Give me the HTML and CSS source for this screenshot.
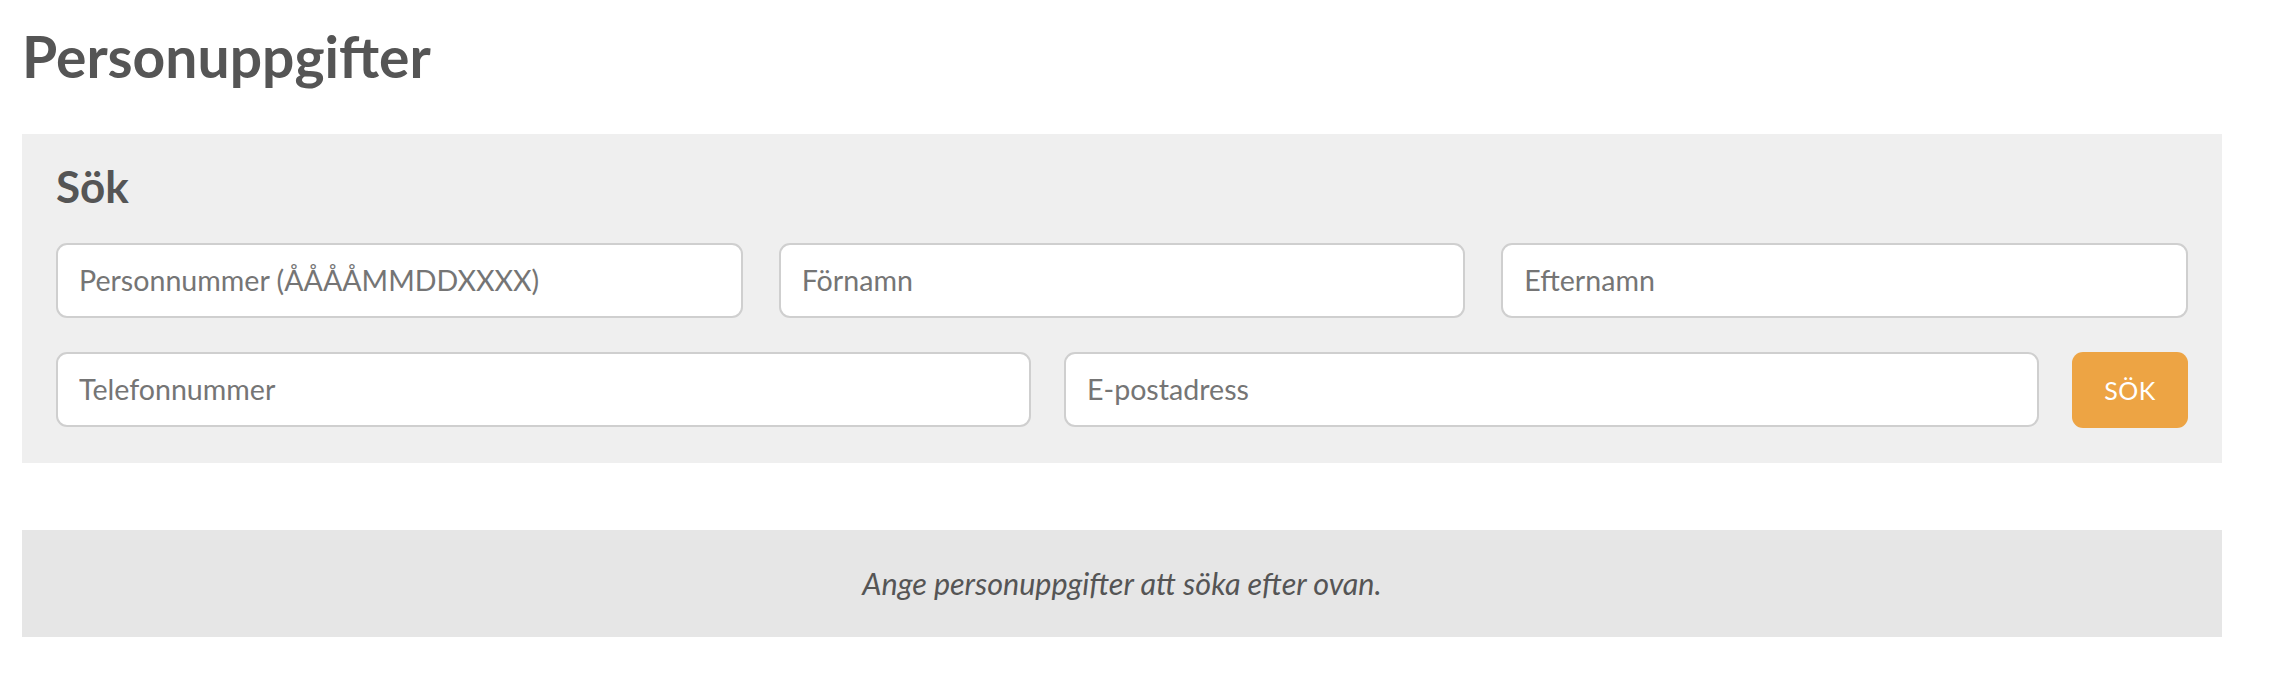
FILE: index.html
```html
<!DOCTYPE html>
<html lang="sv">
<head>
<meta charset="utf-8">
<title>Personuppgifter</title>
<link rel="stylesheet" href="styles.css">
</head>
<body>
<div class="page">
  <h1 class="page-title">Personuppgifter</h1>
  <section class="search-panel">
    <h2 class="search-title">Sök</h2>
    <form class="search-form">
      <div class="row row-three">
        <input class="field" type="text" placeholder="Personnummer (ÅÅÅÅMMDDXXXX)">
        <input class="field" type="text" placeholder="Förnamn">
        <input class="field" type="text" placeholder="Efternamn">
      </div>
      <div class="row row-two">
        <input class="field" type="text" placeholder="Telefonnummer">
        <input class="field" type="text" placeholder="E-postadress">
        <button class="search-btn" type="button">SÖK</button>
      </div>
    </form>
  </section>
  <div class="message">Ange personuppgifter att söka efter ovan.</div>
</div>
</body>
</html>
```
FILE: styles.css
```css
html, body {
  margin: 0;
  padding: 0;
  background: #ffffff;
}

body {
  font-family: Lato, "Open Sans", "Liberation Sans", sans-serif;
  color: #555555;
}

.page {
  width: 2200px;
  margin-left: 22px;
}

.page-title {
  margin: 22px 0 0 0;
  font-size: 57px;
  font-weight: 700;
  line-height: 1.2;
  color: #555555;
  height: 112px;
}

.search-panel {
  background: #efefef;
  padding: 26px 34px 35px 34px;
}

.search-title {
  margin: 0 0 30px 0;
  font-size: 44px;
  font-weight: 700;
  line-height: 1.2;
  color: #555555;
}

.search-form {
  display: flex;
  flex-direction: column;
  gap: 34px;
}

.row {
  display: flex;
  gap: 36px;
}

.row-two {
  gap: 33px;
}

.field {
  flex: 1 1 0;
  min-width: 0;
  box-sizing: border-box;
  height: 75px;
  padding: 0 21px;
  border: 2px solid #cfcfcf;
  border-radius: 11px;
  background: #ffffff;
  font-family: Lato, "Open Sans", "Liberation Sans", sans-serif;
  font-size: 28.6px;
  color: #555555;
  outline: none;
}

.field::placeholder {
  color: #757575;
  opacity: 1;
}

.search-btn {
  flex: 0 0 116px;
  height: 76px;
  border: none;
  border-radius: 11px;
  background: #eda444;
  color: #ffffff;
  font-family: Lato, "Open Sans", "Liberation Sans", sans-serif;
  font-size: 25px;
  font-weight: 400;
  letter-spacing: 0.5px;
  cursor: pointer;
}

.message {
  margin-top: 67px;
  height: 107px;
  display: flex;
  align-items: center;
  justify-content: center;
  background: #e6e6e6;
  font-size: 30.5px;
  font-style: italic;
  color: #555555;
}
```
